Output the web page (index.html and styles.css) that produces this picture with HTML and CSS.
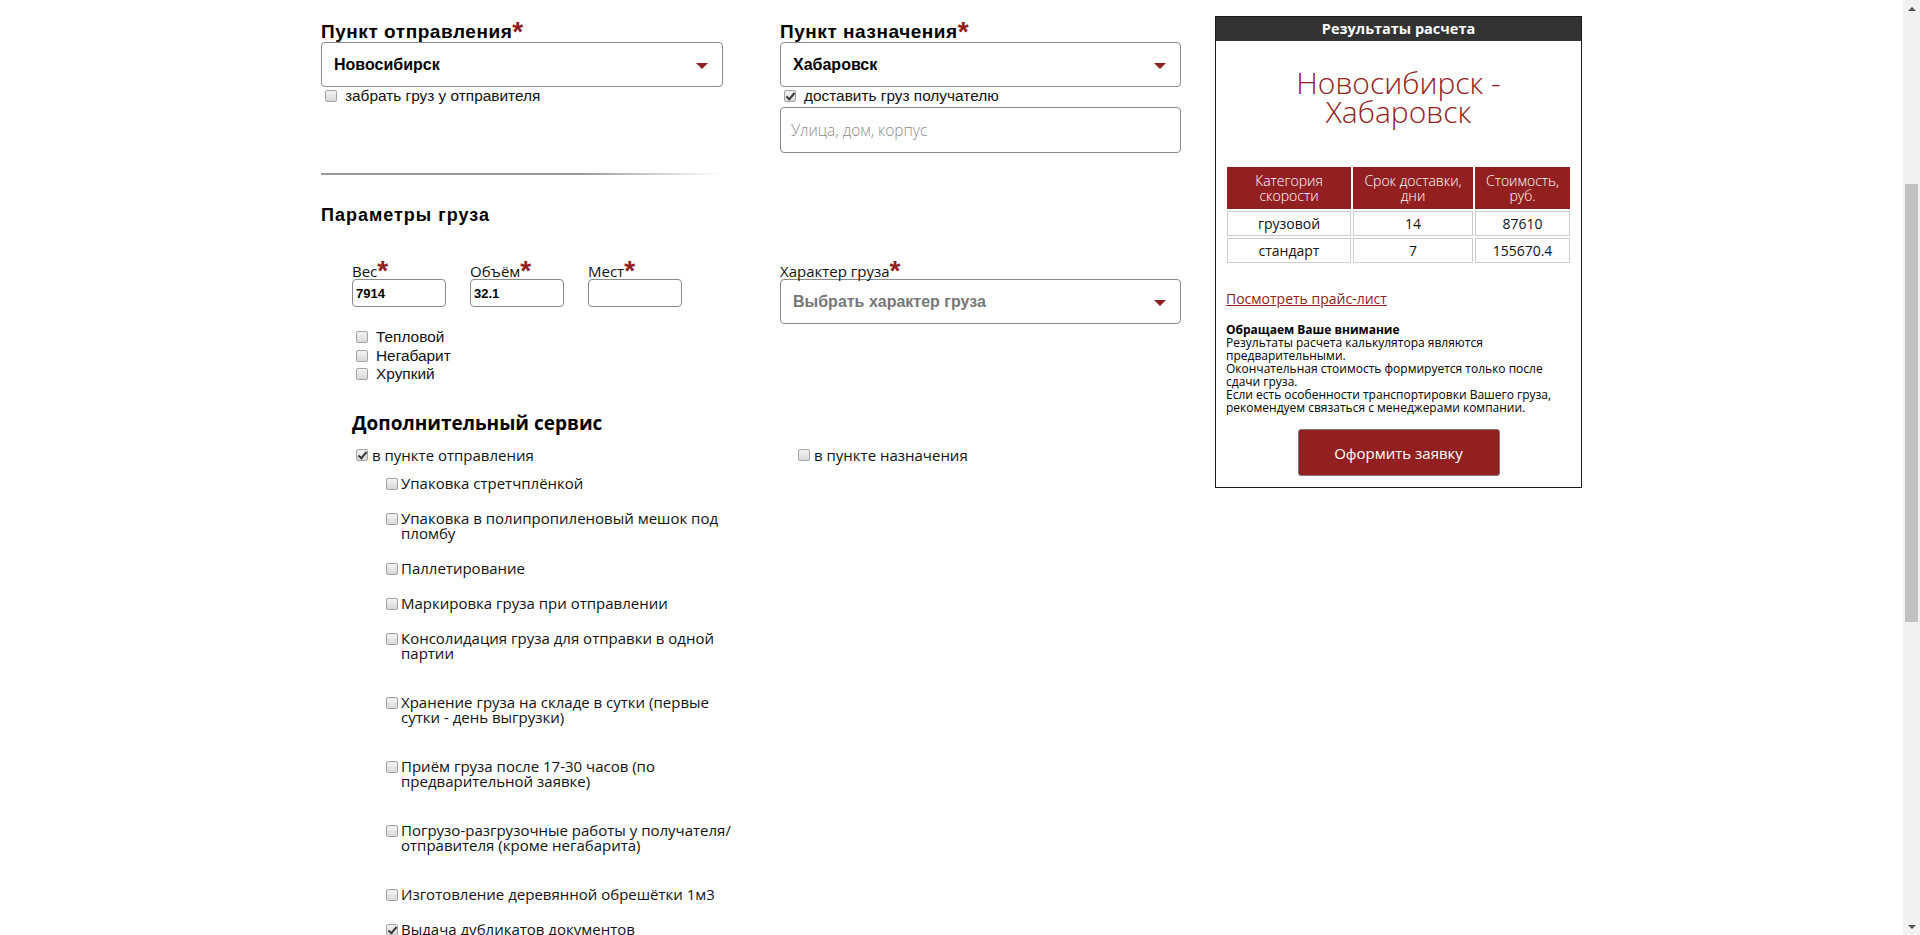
FILE: index.html
```html
<!DOCTYPE html>
<html lang="ru">
<head>
<meta charset="utf-8">
<title>Калькулятор доставки</title>
<link rel="stylesheet" href="styles.css">
</head>
<body>
<div class="viewport">
  <main class="page">
    <div class="container">
      <form class="calc">
        <section class="route">
          <div class="route-col route-col--from">
            <h2 class="field-title">Пункт отправления<span class="req">*</span></h2>
            <div class="select"><span class="select-value">Новосибирск</span><span class="caret"></span></div>
            <label class="check"><input class="cb" type="checkbox">забрать груз у отправителя</label>
          </div>
          <div class="route-col route-col--to">
            <h2 class="field-title">Пункт назначения<span class="req">*</span></h2>
            <div class="select"><span class="select-value">Хабаровск</span><span class="caret"></span></div>
            <label class="check"><input class="cb" type="checkbox" checked>доставить груз получателю</label>
            <input class="text-input" type="text" placeholder="Улица, дом, корпус">
          </div>
        </section>

        <hr class="divider">

        <h2 class="section-title">Параметры груза</h2>
        <section class="params">
          <div class="params-left">
            <div class="measures">
              <div class="measure">
                <label class="field-label">Вес<span class="req">*</span></label>
                <input class="measure-input" type="text" value="7914">
              </div>
              <div class="measure">
                <label class="field-label">Объём<span class="req">*</span></label>
                <input class="measure-input" type="text" value="32.1">
              </div>
              <div class="measure">
                <label class="field-label">Мест<span class="req">*</span></label>
                <input class="measure-input" type="text" value="">
              </div>
            </div>
            <div class="props">
              <label class="check check--prop"><input class="cb" type="checkbox">Тепловой</label>
              <label class="check check--prop"><input class="cb" type="checkbox">Негабарит</label>
              <label class="check check--prop"><input class="cb" type="checkbox">Хрупкий</label>
            </div>
          </div>
          <div class="params-right">
            <label class="field-label">Характер груза<span class="req">*</span></label>
            <div class="select select--placeholder"><span class="select-value">Выбрать характер груза</span><span class="caret"></span></div>
          </div>
        </section>

        <section class="services">
          <h2 class="services-title">Дополнительный сервис</h2>
          <div class="services-cols">
            <div class="services-col services-col--from">
              <label class="svc-head"><input class="cb" type="checkbox" checked>в пункте отправления</label>
              <ul class="svc-list">
                <li class="svc"><input class="cb" type="checkbox"><span class="svc-text">Упаковка стретчплёнкой</span></li>
                <li class="svc"><input class="cb" type="checkbox"><span class="svc-text">Упаковка в полипропиленовый мешок под пломбу</span></li>
                <li class="svc"><input class="cb" type="checkbox"><span class="svc-text">Паллетирование</span></li>
                <li class="svc"><input class="cb" type="checkbox"><span class="svc-text">Маркировка груза при отправлении</span></li>
                <li class="svc"><input class="cb" type="checkbox"><span class="svc-text">Консолидация груза для отправки в одной партии</span></li>
                <li class="svc svc--loose"><input class="cb" type="checkbox"><span class="svc-text">Хранение груза на складе в сутки (первые сутки - день выгрузки)</span></li>
                <li class="svc svc--loose"><input class="cb" type="checkbox"><span class="svc-text">Приём груза после 17-30 часов (по предварительной заявке)</span></li>
                <li class="svc svc--loose"><input class="cb" type="checkbox"><span class="svc-text">Погрузо-разгрузочные работы у получателя/ отправителя (кроме негабарита)</span></li>
                <li class="svc svc--loose"><input class="cb" type="checkbox"><span class="svc-text">Изготовление деревянной обрешётки 1м3</span></li>
                <li class="svc"><input class="cb" type="checkbox" checked><span class="svc-text">Выдача дубликатов документов</span></li>
              </ul>
            </div>
            <div class="services-col services-col--to">
              <label class="svc-head"><input class="cb" type="checkbox">в пункте назначения</label>
            </div>
          </div>
        </section>
      </form>

      <aside class="results">
        <h3 class="results-head">Результаты расчета</h3>
        <p class="results-route">Новосибирск - Хабаровск</p>
        <table class="rates">
          <colgroup><col class="rates-c1"><col class="rates-c2"><col class="rates-c3"></colgroup>
          <thead>
            <tr><th>Категория скорости</th><th>Срок доставки, дни</th><th>Стоимость, руб.</th></tr>
          </thead>
          <tbody>
            <tr><td>грузовой</td><td>14</td><td>87610</td></tr>
            <tr><td>стандарт</td><td>7</td><td>155670.4</td></tr>
          </tbody>
        </table>
        <a class="price-link" href="#">Посмотреть прайс-лист</a>
        <p class="notice"><b class="notice-title">Обращаем Ваше внимание</b>Результаты расчета калькулятора являются предварительными.<br>Окончательная стоимость формируется только после сдачи груза.<br>Если есть особенности транспортировки Вашего груза, рекомендуем связаться с менеджерами компании.</p>
        <button class="order-btn" type="button">Оформить заявку</button>
      </aside>
    </div>
  </main>
  <div class="scrollbar" aria-hidden="true">
    <div class="sb-btn"><span class="sb-arrow sb-arrow--up"></span></div>
    <div class="sb-track"><div class="sb-thumb"></div></div>
    <div class="sb-btn"><span class="sb-arrow sb-arrow--down"></span></div>
  </div>
</div>
</body>
</html>
```

FILE: styles.css
```css
* { box-sizing: border-box; }
html, body { margin: 0; padding: 0; }
body {
  font-family: "Liberation Sans", Arial, sans-serif;
  color: #000;
  background: #fff;
  overflow: hidden;
}
.viewport { display: flex; height: 935px; }
.page { flex: 1; min-width: 0; overflow: hidden; padding-top: 16px; }
.container {
  width: 1261px;
  margin: 0 auto;
  display: flex;
  align-items: flex-start;
  gap: 34px;
}
.calc { width: 860px; padding-top: 6px; }

/* route */
.route { display: flex; gap: 57px; align-items: flex-start; }
.route-col--from { width: 402px; }
.route-col--to { width: 401px; }
.field-title {
  margin: 0;
  font: bold 19px/20px "Liberation Sans", Arial, sans-serif;
  letter-spacing: 0.55px;
}
.req {
  color: #922020;
  font-family: "Liberation Sans", Arial, sans-serif;
  font-weight: bold;
  font-size: 28px;
  line-height: 0;
  letter-spacing: 0;
  vertical-align: -3px;
}

.select {
  height: 45px;
  border: 1px solid #8a8a8a;
  border-radius: 4px;
  display: flex;
  align-items: center;
  justify-content: space-between;
  padding: 0 14px 0 12px;
  font: bold 16px/20px "Liberation Sans", Arial, sans-serif;
  color: #000;
}
.select--placeholder { color: #777; }
.caret {
  width: 0;
  height: 0;
  margin-top: 3px;
  border-left: 6px solid transparent;
  border-right: 6px solid transparent;
  border-top: 6px solid #922020;
}

.check {
  display: flex;
  align-items: center;
  font: 15.4px/17px "Liberation Sans", Arial, sans-serif;
  color: #111;
}
.check .cb { margin-right: 8px; }

.cb {
  appearance: none;
  -webkit-appearance: none;
  position: relative;
  flex: none;
  width: 12px;
  height: 12px;
  margin: 0 3px 0 4px;
  border: 1px solid #a3a3a3;
  border-radius: 2px;
  background: linear-gradient(#f3f3f3, #d9d9d9);
}
.cb:checked::after {
  content: "";
  position: absolute;
  left: 3px;
  top: 0;
  width: 3px;
  height: 7px;
  border: solid #3a3a3a;
  border-width: 0 2px 2px 0;
  transform: rotate(40deg);
}

.text-input {
  display: block;
  width: 100%;
  height: 46px;
  margin: 3px 0 0;
  border: 1px solid #8a8a8a;
  border-radius: 4px;
  padding: 0 10px;
  font: 300 15.5px "Open Sans", sans-serif;
  color: #333;
}
.text-input::placeholder { color: #8c8c8c; }

.divider {
  width: 400px;
  height: 2px;
  margin: 20px 0 0;
  border: 0;
  background: linear-gradient(to right, #9a9a9a 0%, #9a9a9a 65%, rgba(154,154,154,0) 100%);
}

.section-title {
  margin: 30px 0 0;
  font: bold 18px/20px "Liberation Sans", Arial, sans-serif;
  letter-spacing: 1px;
}

/* params */
.params { display: flex; gap: 57px; align-items: flex-start; margin-top: 39px; }
.params-left { width: 402px; padding-left: 31px; }
.params-right { width: 401px; }
.measures { display: flex; gap: 24px; }
.field-label {
  display: block;
  font: 15px/15px "Open Sans", sans-serif;
  color: #111;
}
.measure-input {
  display: block;
  width: 94px;
  height: 28px;
  margin: 0;
  border: 1px solid #8a8a8a;
  border-radius: 4px;
  padding: 0 3px;
  font: bold 13px "Liberation Sans", Arial, sans-serif;
  color: #000;
}
.props { margin-top: 21px; }
.check--prop { line-height: 18.5px; }

/* services */
.services { padding-left: 31px; margin-top: 27px; }
.services-title {
  margin: 0;
  font: bold 19px/24px "Open Sans", sans-serif;
}
.services-cols { display: flex; margin-top: 12px; }
.services-col--from { width: 442px; }
.svc-head {
  display: flex;
  align-items: center;
  font: 15px/16px "Open Sans", sans-serif;
  color: #111;
}
.svc-head .cb { margin-right: 4px; }
.svc-list { list-style: none; margin: 13px 0 0; padding: 0 0 0 30px; }
.svc {
  display: flex;
  align-items: flex-start;
  margin-top: 20px;
  font: 15px/15px "Open Sans", sans-serif;
  color: #111;
}
.svc:first-child { margin-top: 0; }
.svc--loose { margin-top: 34px; }
.svc .cb { margin-top: 2px; }
.svc-text { max-width: 340px; }

/* results */
.results {
  width: 367px;
  flex: none;
  border: 1px solid #1a1a1a;
  padding: 0 10px 11px;
  font-family: "Open Sans", sans-serif;
}
.results-head {
  margin: 0 -10px;
  height: 24px;
  background: #333;
  color: #fff;
  text-align: center;
  font: bold 14.5px/24px "Open Sans", sans-serif;
}
.results-route {
  width: 250px;
  margin: 27px auto 0;
  text-align: center;
  color: #922020;
  font: 300 30px/29px "Open Sans", sans-serif;
}
.rates {
  width: calc(100% + 2px);
  margin: 39px -1px 0;
  border-collapse: separate;
  border-spacing: 2px;
  table-layout: fixed;
  text-align: center;
  font: 14px "Open Sans", sans-serif;
}
.rates-c1 { width: 124px; }
.rates-c2 { width: 120px; }
.rates th {
  background: #922020;
  color: #fff;
  font-weight: 300;
  line-height: 15px;
  padding: 6px 2px;
}
.rates td {
  border: 1px solid #ccc;
  line-height: 23px;
  padding: 0;
  color: #111;
}
.price-link {
  display: block;
  margin-top: 25px;
  color: #922020;
  text-decoration: underline;
  font: 14px/18px "Open Sans", sans-serif;
}
.notice {
  margin: 15px 0 0;
  font: 12px/13px "Open Sans", sans-serif;
  color: #000;
}
.notice-title { display: block; font-weight: bold; }
.order-btn {
  display: block;
  width: 202px;
  height: 47px;
  margin: 15px auto 0;
  background: #922020;
  color: #fff;
  border: 1px solid #7a7a7a;
  border-radius: 3px;
  font: 15px "Open Sans", sans-serif;
  cursor: pointer;
}

/* scrollbar */
.scrollbar {
  width: 17px;
  flex: none;
  background: #f1f1f1;
  display: flex;
  flex-direction: column;
}
.sb-btn {
  height: 17px;
  display: flex;
  align-items: center;
  justify-content: center;
}
.sb-arrow { width: 0; height: 0; border-left: 4px solid transparent; border-right: 4px solid transparent; }
.sb-arrow--up { border-bottom: 4px solid #505050; }
.sb-arrow--down { border-top: 4px solid #505050; }
.sb-track { flex: 1; }
.sb-thumb {
  width: 13px;
  height: 438px;
  margin: 167px 0 0 2px;
  background: #c1c1c1;
}
```
